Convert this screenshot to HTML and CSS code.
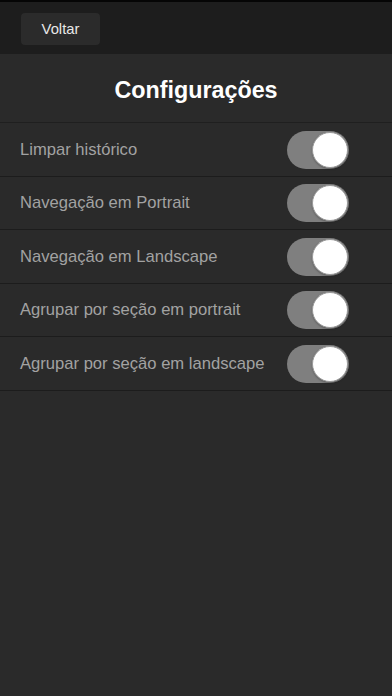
FILE: index.html
```html
<!DOCTYPE html>
<html lang="pt">
<head>
<meta charset="utf-8">
<title>Configurações</title>
<link rel="stylesheet" href="styles.css">
</head>
<body>
<div class="screen">
  <header class="navbar">
    <button class="back">Voltar</button>
  </header>
  <h1 class="title">Configurações</h1>
  <ul class="list">
    <li class="row"><span class="label">Limpar histórico</span><span class="switch"><span class="knob"></span></span></li>
    <li class="row"><span class="label">Navegação em Portrait</span><span class="switch"><span class="knob"></span></span></li>
    <li class="row"><span class="label">Navegação em Landscape</span><span class="switch"><span class="knob"></span></span></li>
    <li class="row"><span class="label">Agrupar por seção em portrait</span><span class="switch"><span class="knob"></span></span></li>
    <li class="row"><span class="label">Agrupar por seção em landscape</span><span class="switch"><span class="knob"></span></span></li>
  </ul>
</div>
</body>
</html>
```
FILE: styles.css
```css
* { box-sizing: border-box; }
html, body { margin: 0; padding: 0; }
body {
  background: #2a2a2a;
  font-family: "Liberation Sans", Arial, sans-serif;
  width: 392px;
  height: 696px;
  overflow: hidden;
}
.screen {
  display: flex;
  flex-direction: column;
  height: 696px;
  background: #2a2a2a;
}
.navbar {
  height: 54px;
  background: #1d1d1d;
  border-top: 2px solid #050505;
  display: flex;
  align-items: center;
  padding-left: 21px;
}
.back {
  width: 79px;
  height: 32px;
  margin-top: 2px;
  background: #2b2b2b;
  border: none;
  border-radius: 4px;
  color: #e8e8e8;
  font-family: "Liberation Sans", Arial, sans-serif;
  font-size: 14.8px;
  padding: 0;
}
.title {
  margin: 0;
  height: 68px;
  display: flex;
  align-items: center;
  justify-content: center;
  color: #ffffff;
  font-size: 23.3px;
  font-weight: bold;
  padding-top: 4px;
}
.list {
  list-style: none;
  margin: 0;
  padding: 0;
  border-top: 1px solid #1f1f1f;
}
.row {
  height: 53.5px;
  display: flex;
  align-items: center;
  justify-content: space-between;
  padding: 1px 43px 0 20px;
  border-bottom: 1px solid #1c1c1c;
}
.label {
  color: #a2a2a2;
  font-size: 16.6px;
}
.switch {
  width: 62px;
  height: 38px;
  border-radius: 19px;
  background: #7f7f7f;
  display: flex;
  align-items: center;
  justify-content: flex-end;
  padding-right: 1px;
}
.knob {
  width: 36px;
  height: 36px;
  border-radius: 50%;
  background: #ffffff;
  border: 1px solid #9a9a9a;
  box-shadow: 0 1px 2px rgba(0,0,0,0.25);
}
```
